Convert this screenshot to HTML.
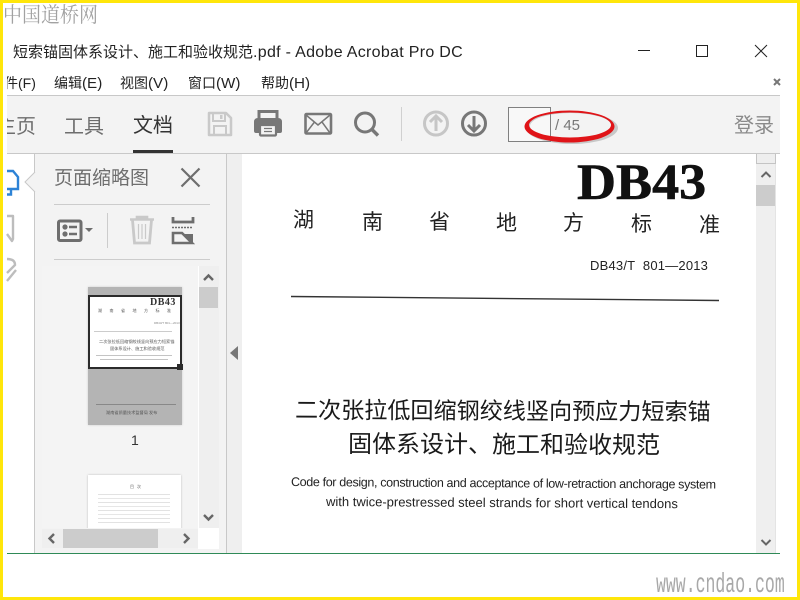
<!DOCTYPE html>
<html><head><meta charset="utf-8"><style>
*{margin:0;padding:0;box-sizing:border-box}
html,body{width:800px;height:600px;overflow:hidden;background:#fff}
body{position:relative;font-family:"Liberation Sans","Noto Sans CJK SC",sans-serif;color:#222}
.a{position:absolute}
.t{position:absolute;white-space:nowrap;line-height:1}
.s{font-family:"Noto Serif CJK SC","Liberation Serif",serif}
.l{font-size:15.200px}
svg{position:absolute;overflow:visible}
</style></head><body>
<div class="a" style="left:0;top:0;width:800px;height:3px;background:#ffe60a"></div>
<div class="a" style="left:0;top:597px;width:800px;height:3px;background:#ffe60a"></div>
<div class="a" style="left:0;top:0;width:3px;height:600px;background:#ffe60a"></div>
<div class="a" style="left:797px;top:0;width:3px;height:600px;background:#ffe60a"></div>

<div class="t s" style="left:3px;top:3px;font-size:19px;color:#a2a2a2;transform:scaleY(1.120);transform-origin:top left">中国道桥网</div>

<div class="t" style="left:13px;top:45px;font-size:15px;color:#222">短索锚固体系设计、施工和验收规范<span style="font-size:16px;letter-spacing:.3px">.pdf - Adobe Acrobat Pro DC</span></div>
<svg style="left:0;top:0" width="800" height="100" fill="none" stroke="#222" stroke-width="1">
<path d="M638 50.500H650"/><rect x="696.500" y="45.500" width="11" height="11"/><path d="M755 45L767 57M767 45L755 57"/>
<path d="M774 79L780 85M780 79L774 85" stroke="#777" stroke-width="2"/>
</svg>

<div class="a" style="left:7px;top:70px;width:34px;height:24px;overflow:hidden"><div class="t" style="left:-17px;top:6px;font-size:14px">文件(F)</div></div>
<div class="t" style="left:54px;top:76px;font-size:14px">编辑<span class="l">(E)</span></div>
<div class="t" style="left:120px;top:76px;font-size:14px">视图<span class="l">(V)</span></div>
<div class="t" style="left:188px;top:76px;font-size:14px">窗口<span class="l">(W)</span></div>
<div class="t" style="left:261px;top:76px;font-size:14px">帮助<span class="l">(H)</span></div>

<!-- toolbar -->
<div class="a" style="left:7px;top:95px;width:773px;height:59px;background:#f3f3f3;border-top:1px solid #c8c8c8;border-bottom:1px solid #c8c8c8"></div>
<div class="a" style="left:7px;top:114px;width:28px;height:26px;overflow:hidden"><div class="t" style="left:-11px;top:3px;font-size:20px;color:#6e6e6e">主页</div></div>
<div class="t" style="left:64px;top:117px;font-size:20px;color:#6e6e6e">工具</div>
<div class="t" style="left:133px;top:116px;font-size:20px;color:#333">文档</div>
<div class="a" style="left:133px;top:150px;width:40px;height:3px;background:#333"></div>

<svg style="left:0;top:0" width="800" height="160" fill="none">
<!-- save -->
<path d="M209 113H226L231 118V135H209Z" stroke="#c9c9c9" stroke-width="2.500" stroke-linejoin="round"/>
<path d="M213 113V121H225V113M214 135V126H226V135" stroke="#c9c9c9" stroke-width="2"/>
<rect x="220" y="115" width="2.500" height="4" fill="#c9c9c9"/>
<!-- print -->
<path d="M259 120V111.500H277V120" stroke="#777" stroke-width="3"/>
<path d="M258 118H278Q282 118 282 122V131Q282 133 280 133H256Q254 133 254 131V122Q254 118 258 118Z" fill="#777"/>
<rect x="260" y="125" width="16" height="10.500" rx="1" fill="#f3f3f3" stroke="#777" stroke-width="2.200"/>
<path d="M264 128.500H272M264 131.500H272" stroke="#777" stroke-width="1.300"/>
<!-- mail -->
<rect x="305.500" y="114" width="25.500" height="19.500" rx="1" stroke="#777" stroke-width="2.600"/>
<path d="M306 115L318 125L330 115M306 133L314.500 122M330 133L322 122" stroke="#777" stroke-width="1.500"/>
<!-- search -->
<circle cx="365" cy="122.500" r="9.500" stroke="#777" stroke-width="3"/>
<path d="M372 129.500L378 135.500" stroke="#777" stroke-width="3.400"/>
<path d="M401.500 107V141" stroke="#d0d0d0"/>
<!-- up -->
<circle cx="436" cy="123.500" r="11.500" stroke="#c6c6c6" stroke-width="3"/>
<path d="M436 131V116.500M430 122L436 116L442 122" stroke="#c6c6c6" stroke-width="3"/>
<!-- down -->
<circle cx="474" cy="123.500" r="11.500" stroke="#777" stroke-width="3"/>
<path d="M474 116V130.500M468 125L474 131L480 125" stroke="#777" stroke-width="3"/>
</svg>

<div class="a" style="left:508px;top:107px;width:43px;height:35px;background:#f8f8f8;border:1px solid #808080"></div>
<div class="t" style="left:555px;top:118px;font-size:15px;color:#777">/ 45</div>
<div class="t" style="left:734px;top:116px;font-size:20px;color:#8a8a8a">登录</div>

<svg style="left:0;top:0" width="800" height="160">
<path fill-rule="evenodd" fill="#888" opacity=".4" d="M526 128a46 16 0 1 0 92 0a46 16 0 1 0 -92 0ZM530 126a41 13 0 1 0 82 0a41 13 0 1 0 -82 0Z"/>
<path fill-rule="evenodd" fill="#e01418" d="M524.500 126.500a45 16 0 1 0 90 0a45 16 0 1 0 -90 0ZM529 125a41 12.500 0 1 0 82 0a41 12.500 0 1 0 -82 0Z"/>
</svg>

<!-- left strip icons -->
<svg style="left:0;top:154px" width="40" height="130" fill="none">
<path d="M7 17H13L18 23V35H7M11 36V40.500H7" stroke="#2d83d6" stroke-width="2.400"/>
<path d="M7 62H13V85L12 87L7 80" stroke="#bdbdbd" stroke-width="2.400" stroke-linejoin="round"/>
<path d="M7 105Q15 105 15 111L7 119" stroke="#bdbdbd" stroke-width="2.400"/>
<path d="M7 127L16 116" stroke="#bdbdbd" stroke-width="2.400"/>
</svg>

<!-- panel -->
<div class="a" style="left:34px;top:154px;width:193px;height:399px;background:#f3f3f3;border-left:1px solid #c8c8c8;border-right:1px solid #c8c8c8"></div>
<svg style="left:0;top:0" width="40" height="200"><path d="M35 172L25 182L35 192" fill="#f3f3f3" stroke="#c8c8c8"/></svg>
<div class="t" style="left:54px;top:169px;font-size:19px;color:#6e6e6e">页面缩略图</div>
<svg style="left:0;top:150px" width="240" height="120" fill="none">
<path d="M181.500 18.500L199.500 36.500M199.500 18.500L181.500 36.500" stroke="#6e6e6e" stroke-width="2.200"/>
<path d="M54 54.500H210M54 109.500H210" stroke="#ccc"/>
<path d="M107.500 63V98" stroke="#ccc"/>
<rect x="58.500" y="71" width="22.500" height="19.500" rx="1.500" stroke="#6e6e6e" stroke-width="3"/>
<circle cx="65" cy="77" r="2.600" fill="#6e6e6e"/><circle cx="65" cy="84" r="2.600" fill="#6e6e6e"/>
<path d="M69 77H77M69 84H77" stroke="#6e6e6e" stroke-width="2.400"/>
<path d="M85 78H93L89 82Z" fill="#6e6e6e"/>
<path d="M130 69.500H154M137 69V67H147V69" stroke="#c9c9c9" stroke-width="2.600"/>
<path d="M132.500 70L134.500 93H149.500L151.500 70" stroke="#c9c9c9" stroke-width="2.800"/>
<path d="M138.500 74V89M142 74V89M145.500 74V89" stroke="#c9c9c9" stroke-width="1.200"/>
<path d="M173 67V72H193V67" stroke="#6e6e6e" stroke-width="2.800"/>
<path d="M172 77.500H193" stroke="#6e6e6e" stroke-width="1.600" stroke-dasharray="2 1"/>
<path d="M173 93V83H182L192 93Z" stroke="#6e6e6e" stroke-width="2.600"/>
<path d="M183 84L193 84V93Z" fill="#6e6e6e"/>
</svg>

<!-- thumb list -->
<div class="a" style="left:42px;top:266px;width:156px;height:262px;background:#f4f4f4;overflow:hidden">
  <div class="a" style="left:46px;top:21px;width:94px;height:138px;background:#b4b4b4;box-shadow:0 0 2px #ccc"></div>
  <div class="a" style="left:46px;top:29px;width:94px;height:74px;background:#fff;border:2px solid #2b2b2b"></div>
  <div class="t" style="left:108px;top:31px;font:bold 10px 'Liberation Serif',serif;color:#333;letter-spacing:.5px">DB43</div>
  <div class="t" style="left:56px;top:43px;font-size:4px;color:#555;letter-spacing:7.500px">湖南省地方标准</div>
  <div class="a" style="left:52px;top:65px;width:78px;height:1px;background:#ccc"></div>
  <div class="t" style="left:112px;top:56px;font-size:3px;color:#888">DB43/T 801—2013</div>
  <div class="t" style="left:57px;top:74px;font-size:4.200px;color:#555">二次张拉低回缩钢绞线竖向预应力短索锚</div>
  <div class="t" style="left:68px;top:81px;font-size:4.200px;color:#555">固体系设计、施工和验收规范</div>
  <div class="a" style="left:54px;top:89px;width:76px;height:1px;background:#c4c4c4"></div>
  <div class="a" style="left:58px;top:93px;width:68px;height:1px;background:#c4c4c4"></div>
  <div class="a" style="left:135px;top:98px;width:6px;height:6px;background:#2b2b2b"></div>
  <div class="a" style="left:54px;top:138px;width:80px;height:1px;background:#888"></div>
  <div class="t" style="left:64px;top:145px;font-size:4.200px;color:#555">湖南省质量技术监督局 发布</div>
  <div class="t" style="left:89px;top:167px;font-size:14px;color:#333">1</div>
  <div class="a" style="left:46px;top:209px;width:93px;height:60px;background:#fff;box-shadow:0 0 2px #bbb"></div>
  <div class="t" style="left:88px;top:219px;font-size:4px;color:#666;letter-spacing:3px">目次</div>
  <div class="a" style="left:56px;top:228px;width:72px;height:1px;background:#e2e2e2"></div>
  <div class="a" style="left:56px;top:232px;width:72px;height:1px;background:#e6e6e6"></div>
  <div class="a" style="left:56px;top:236px;width:72px;height:1px;background:#e2e2e2"></div>
  <div class="a" style="left:56px;top:240px;width:72px;height:1px;background:#e6e6e6"></div>
  <div class="a" style="left:56px;top:244px;width:72px;height:1px;background:#e2e2e2"></div>
  <div class="a" style="left:56px;top:248px;width:72px;height:1px;background:#e6e6e6"></div>
  <div class="a" style="left:56px;top:252px;width:72px;height:1px;background:#e2e2e2"></div>
  <div class="a" style="left:56px;top:256px;width:72px;height:1px;background:#e2e2e2"></div>
</div>
<div class="a" style="left:198px;top:266px;width:1px;height:262px;background:#fff"></div>
<div class="a" style="left:199px;top:266px;width:20px;height:262px;background:#efefef"></div>
<div class="a" style="left:199px;top:287px;width:19px;height:21px;background:#ccc"></div>
<div class="a" style="left:42px;top:529px;width:156px;height:19px;background:#efefef"></div>
<div class="a" style="left:63px;top:529px;width:95px;height:19px;background:#ccc"></div>
<div class="a" style="left:198px;top:528px;width:21px;height:21px;background:#fff"></div>
<svg style="left:0;top:260px" width="240" height="300" fill="none" stroke="#666" stroke-width="2.400">
<path d="M204 20L208.500 15.500L213 20"/><path d="M204 255L208.500 259.500L213 255"/>
<path d="M54 274L49.500 278.500L54 283"/><path d="M184 274L188.500 278.500L184 283"/>
</svg>

<!-- middle strip -->
<div class="a" style="left:227px;top:154px;width:15px;height:399px;background:#efefef"></div>
<svg style="left:229px;top:346px" width="10" height="16"><path d="M9 0V14L1 7Z" fill="#777"/></svg>

<!-- right scrollbar -->
<div class="a" style="left:756px;top:154px;width:20px;height:399px;background:#efefef;border-right:1px solid #e4e4e4"></div>
<div class="a" style="left:756px;top:154px;width:20px;height:10px;background:#eee;border:1px solid #c4c4c4;border-top:0"></div>
<div class="a" style="left:756px;top:185px;width:19px;height:21px;background:#ccc"></div>
<svg style="left:756px;top:160px" width="20" height="400" fill="none" stroke="#666" stroke-width="2"><path d="M5.500 17L10 12.500L14.500 17"/><path d="M5.500 380L10 384.500L14.500 380"/></svg>

<!-- PDF -->
<div class="t" style="left:577px;top:154px;font:bold 51px 'Liberation Serif',serif;color:#111;-webkit-text-stroke:.6px #111;transform:scaleX(1.060);transform-origin:left">DB43</div>
<div class="t" style="left:293px;top:210px;font-size:21px;color:#222">湖</div>
<div class="t" style="left:362px;top:212px;font-size:21px;color:#222">南</div>
<div class="t" style="left:429px;top:212px;font-size:21px;color:#222">省</div>
<div class="t" style="left:496px;top:213px;font-size:21px;color:#222">地</div>
<div class="t" style="left:563px;top:213px;font-size:21px;color:#222">方</div>
<div class="t" style="left:631px;top:214px;font-size:21px;color:#222">标</div>
<div class="t" style="left:699px;top:215px;font-size:21px;color:#222">准</div>
<div class="t" style="left:590px;top:259px;font-size:13px;color:#222;letter-spacing:.2px">DB43/T&nbsp; 801—2013</div>
<svg style="left:0;top:0" width="800" height="320"><path d="M291 296.500L719 300.500" stroke="#333" stroke-width="1.400"/></svg>
<div class="t" style="left:295px;top:399px;font-size:23.100px;color:#1a1a1a;transform:rotate(.25deg);transform-origin:left">二次张拉低回缩钢绞线竖向预应力短索锚</div>
<div class="t" style="left:348px;top:433px;font-size:24px;color:#1a1a1a;transform:rotate(.25deg);transform-origin:left">固体系设计、施工和验收规范</div>
<div class="t" style="left:291px;top:476px;font-size:12.500px;color:#222;letter-spacing:-.35px;transform:rotate(.35deg);transform-origin:left">Code for design, construction and acceptance of low-retraction anchorage system</div>
<div class="t" style="left:326px;top:495px;font-size:13px;color:#222;transform:rotate(.35deg);transform-origin:left">with twice-prestressed steel strands for short vertical tendons</div>

<!-- bottom -->
<div class="a" style="left:7px;top:553px;width:773px;height:1px;background:#2f8a57"></div>
<div class="t" style="left:656px;top:568px;font:16.500px 'Liberation Mono',monospace;color:#a8a8a8;transform:scaleY(1.700);transform-origin:top left">www.cndao.com</div>
</body></html>
